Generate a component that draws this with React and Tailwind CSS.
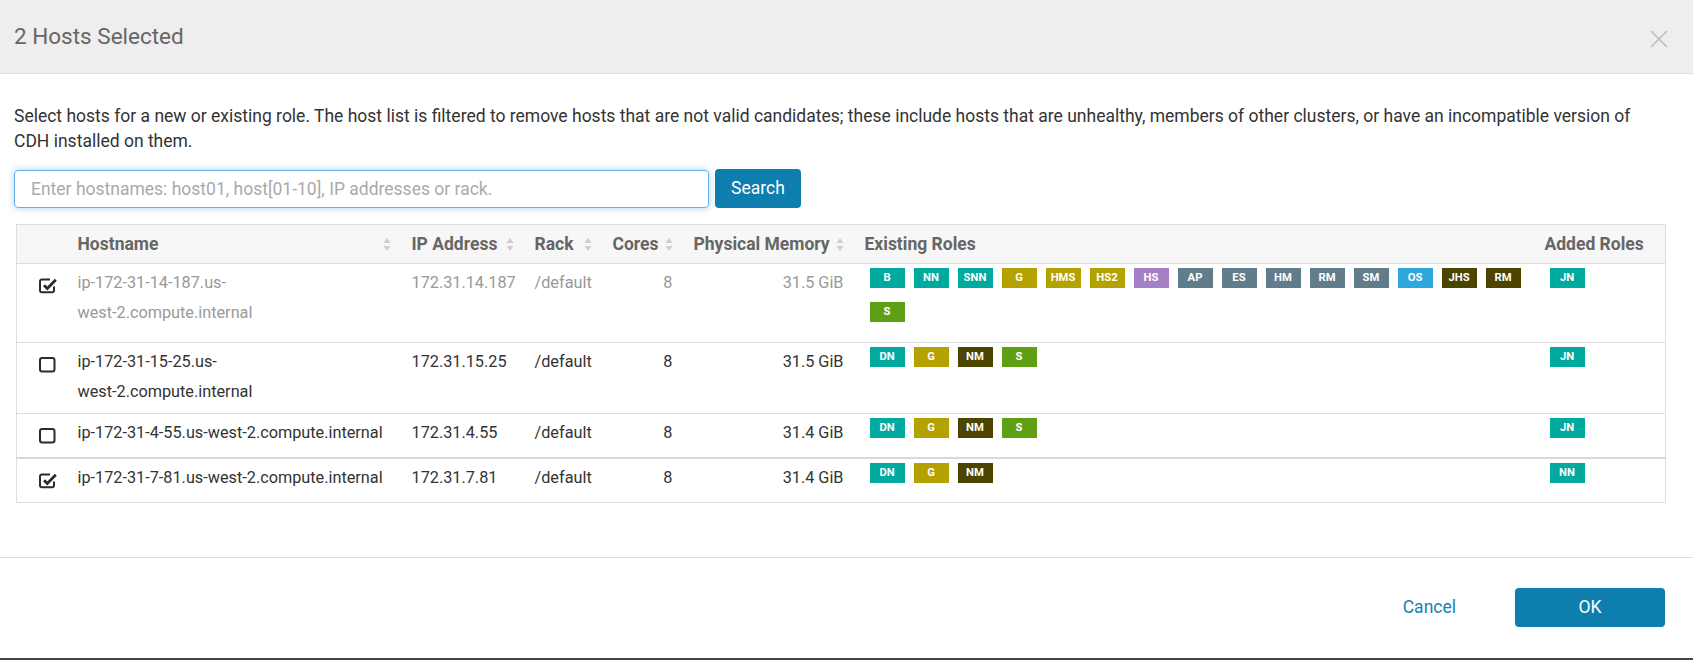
import { useState } from 'react';

const badgeColors = {
  teal: 'bg-[#01aa9e]',
  olive: 'bg-[#b4a200]',
  purple: 'bg-[#a67fc6]',
  slate: 'bg-[#617d8b]',
  blue: 'bg-[#2ea7df]',
  dark: 'bg-[#4d4400]',
  green: 'bg-[#5f9f13]',
};

const hosts = [
  {
    name: ['ip-172-31-14-187.us-', 'west-2.compute.internal'],
    ip: '172.31.14.187',
    rack: '/default',
    cores: 8,
    mem: '31.5 GiB',
    checked: true,
    muted: true,
    roles: [
      ['B', 'teal'], ['NN', 'teal'], ['SNN', 'teal'], ['G', 'olive'], ['HMS', 'olive'],
      ['HS2', 'olive'], ['HS', 'purple'], ['AP', 'slate'], ['ES', 'slate'], ['HM', 'slate'],
      ['RM', 'slate'], ['SM', 'slate'], ['OS', 'blue'], ['JHS', 'dark'], ['RM', 'dark'],
      ['S', 'green'],
    ],
    added: [['JN', 'teal']],
  },
  {
    name: ['ip-172-31-15-25.us-', 'west-2.compute.internal'],
    ip: '172.31.15.25',
    rack: '/default',
    cores: 8,
    mem: '31.5 GiB',
    checked: false,
    roles: [['DN', 'teal'], ['G', 'olive'], ['NM', 'dark'], ['S', 'green']],
    added: [['JN', 'teal']],
  },
  {
    name: ['ip-172-31-4-55.us-west-2.compute.internal'],
    ip: '172.31.4.55',
    rack: '/default',
    cores: 8,
    mem: '31.4 GiB',
    checked: false,
    short: true,
    roles: [['DN', 'teal'], ['G', 'olive'], ['NM', 'dark'], ['S', 'green']],
    added: [['JN', 'teal']],
  },
  {
    name: ['ip-172-31-7-81.us-west-2.compute.internal'],
    ip: '172.31.7.81',
    rack: '/default',
    cores: 8,
    mem: '31.4 GiB',
    checked: true,
    thickTop: true,
    short: true,
    roles: [['DN', 'teal'], ['G', 'olive'], ['NM', 'dark']],
    added: [['NN', 'teal']],
  },
];

const SortIcon = () => (
  <svg width="8" height="15" viewBox="0 0 8 15" className="shrink-0">
    <path d="M0.5 6 L4 1 L7.5 6 Z" fill="#cfcfcf" />
    <path d="M0.5 9 L4 14 L7.5 9 Z" fill="#cfcfcf" />
  </svg>
);

// check-square-o / square-o style boxes
const CheckBox = ({ checked }) =>
  checked ? (
    <svg width="19" height="17" viewBox="0 0 19 17">
      <path
        d="M15 9.5v4a1.8 1.8 0 0 1-1.8 1.8H2.8A1.8 1.8 0 0 1 1 13.5V4.3a1.8 1.8 0 0 1 1.8-1.8H11"
        fill="none"
        stroke="#2b2b2b"
        strokeWidth="2"
      />
      <path d="M5 8.2l3.3 3.3 8.5-8.8" fill="none" stroke="#2b2b2b" strokeWidth="2.8" />
    </svg>
  ) : (
    <svg width="19" height="17" viewBox="0 0 19 17">
      <rect x="1" y="2" width="14.5" height="13.5" rx="2.2" fill="none" stroke="#2b2b2b" strokeWidth="2" />
    </svg>
  );

const Badge = ({ label, color }) => (
  <span
    className={`${badgeColors[color]} w-[35px] h-[20px] flex items-center justify-center text-white text-[11.25px] font-bold leading-none`}
  >
    {label}
  </span>
);

const HeadCell = ({ label, sort, className = '' }) => (
  <th className={`bg-[#f7f7f7] h-[39px] pl-[7px] pr-[14px] text-left font-bold text-[17.5px] text-[#666] ${className}`}>
    <div className="flex items-center justify-between">
      <span className="whitespace-nowrap">{label}</span>
      {sort && <SortIcon />}
    </div>
  </th>
);

export default function App() {
  const [query, setQuery] = useState('');

  return (
    <div className="w-[1693px] h-[660px] bg-white font-['Roboto',sans-serif] flex flex-col border-b-2 border-[#444]">
      <div className="h-[74px] shrink-0 bg-[#efeded] border-b border-[#dcdcdc] flex items-center justify-between pl-[14px] pr-[25px]">
        <h1 className="text-[22.5px] text-[#666]">2 Hosts Selected</h1>
        <svg width="18" height="18" viewBox="0 0 18 18" className="mt-[4px]">
          <path d="M1 1 L17 17 M17 1 L1 17" stroke="#bdbdbd" strokeWidth="1.6" />
        </svg>
      </div>

      <div className="pt-[30px] pl-[14px] pr-[28px]">
        <p className="text-[17.5px] leading-[25px] text-[#333]">
          Select hosts for a new or existing role. The host list is filtered to remove hosts that are not valid candidates; these include hosts that are unhealthy, members of other clusters, or have an incompatible version of
          <br />
          CDH installed on them.
        </p>

        <div className="mt-[15px] flex items-center gap-[6px]">
          <input
            autoFocus
            value={query}
            onChange={(e) => setQuery(e.target.value)}
            placeholder="Enter hostnames: host01, host[01-10], IP addresses or rack."
            className="w-[695px] h-[38px] rounded-[4px] border border-[#66afe9] shadow-[0_0_7px_rgba(102,175,233,0.6)] pl-[16px] text-[17.5px] text-[#333] placeholder:text-[#aaa] outline-none"
          />
          <button className="w-[86px] h-[39px] rounded-[4px] bg-[#0e7eae] text-white text-[17.5px]">Search</button>
        </div>

        <table className="mt-[16px] ml-[2px] w-[1649px] table-fixed border-collapse border border-[#ddd]">
          <thead>
            <tr className="border-b border-[#ddd]">
              <th className="w-[54px] bg-[#f7f7f7]"></th>
              <HeadCell label="Hostname" sort className="w-[334px]" />
              <HeadCell label="IP Address" sort className="w-[123px]" />
              <HeadCell label="Rack" sort className="w-[78px]" />
              <HeadCell label="Cores" sort className="w-[81px]" />
              <HeadCell label="Physical Memory" sort className="w-[171px]" />
              <HeadCell label="Existing Roles" className="w-[680px]" />
              <HeadCell label="Added Roles" className="w-[128px]" />
            </tr>
          </thead>
          <tbody>
            {hosts.map((h, i) => {
              const text = h.muted ? 'text-[#999]' : 'text-[#333]';
              const pb = h.short ? 'pb-[5px]' : 'pb-[6px]';
              const cell = `align-top pt-[4px] ${pb} pl-[7px] pr-[14px] text-[16.25px] leading-[30px] ${text}`;
              const roleCell = `align-top pt-[4px] ${pb} pl-[12px] pr-[7px]`;
              return (
                <tr
                  key={i}
                  className={h.thickTop ? 'border-t-2 border-[#d9d9d9]' : 'border-t border-[#ddd]'}
                >
                  <td className="align-top pt-[4px] pl-[22px]">
                    <div className="h-[30px] flex items-center pt-[4px]">
                      <CheckBox checked={h.checked} />
                    </div>
                  </td>
                  <td className={`${cell} whitespace-nowrap`}>
                    {h.name.map((line, j) => (
                      <div key={j}>{line}</div>
                    ))}
                  </td>
                  <td className={cell}>{h.ip}</td>
                  <td className={cell}>{h.rack}</td>
                  <td className={`${cell} text-right`}>{h.cores}</td>
                  <td className={`${cell} text-right`}>{h.mem}</td>
                  <td className={roleCell}>
                    <div className="flex flex-wrap gap-x-[9px] gap-y-[14px] pb-[14px]">
                      {h.roles.map(([label, color], j) => (
                        <Badge key={j} label={label} color={color} />
                      ))}
                    </div>
                  </td>
                  <td className={roleCell}>
                    <div className="flex flex-wrap gap-x-[9px] gap-y-[14px] pb-[14px]">
                      {h.added.map(([label, color], j) => (
                        <Badge key={j} label={label} color={color} />
                      ))}
                    </div>
                  </td>
                </tr>
              );
            })}
          </tbody>
        </table>
      </div>

      <div className="mt-auto border-t border-[#ddd] flex items-center justify-end gap-[59px] pt-[30px] pb-[31px] pr-[28px]">
        <button className="text-[17.5px] text-[#1a7fb0]">Cancel</button>
        <button className="w-[150px] h-[39px] rounded-[4px] bg-[#0e7eae] text-white text-[17.5px]">OK</button>
      </div>
    </div>
  );
}
